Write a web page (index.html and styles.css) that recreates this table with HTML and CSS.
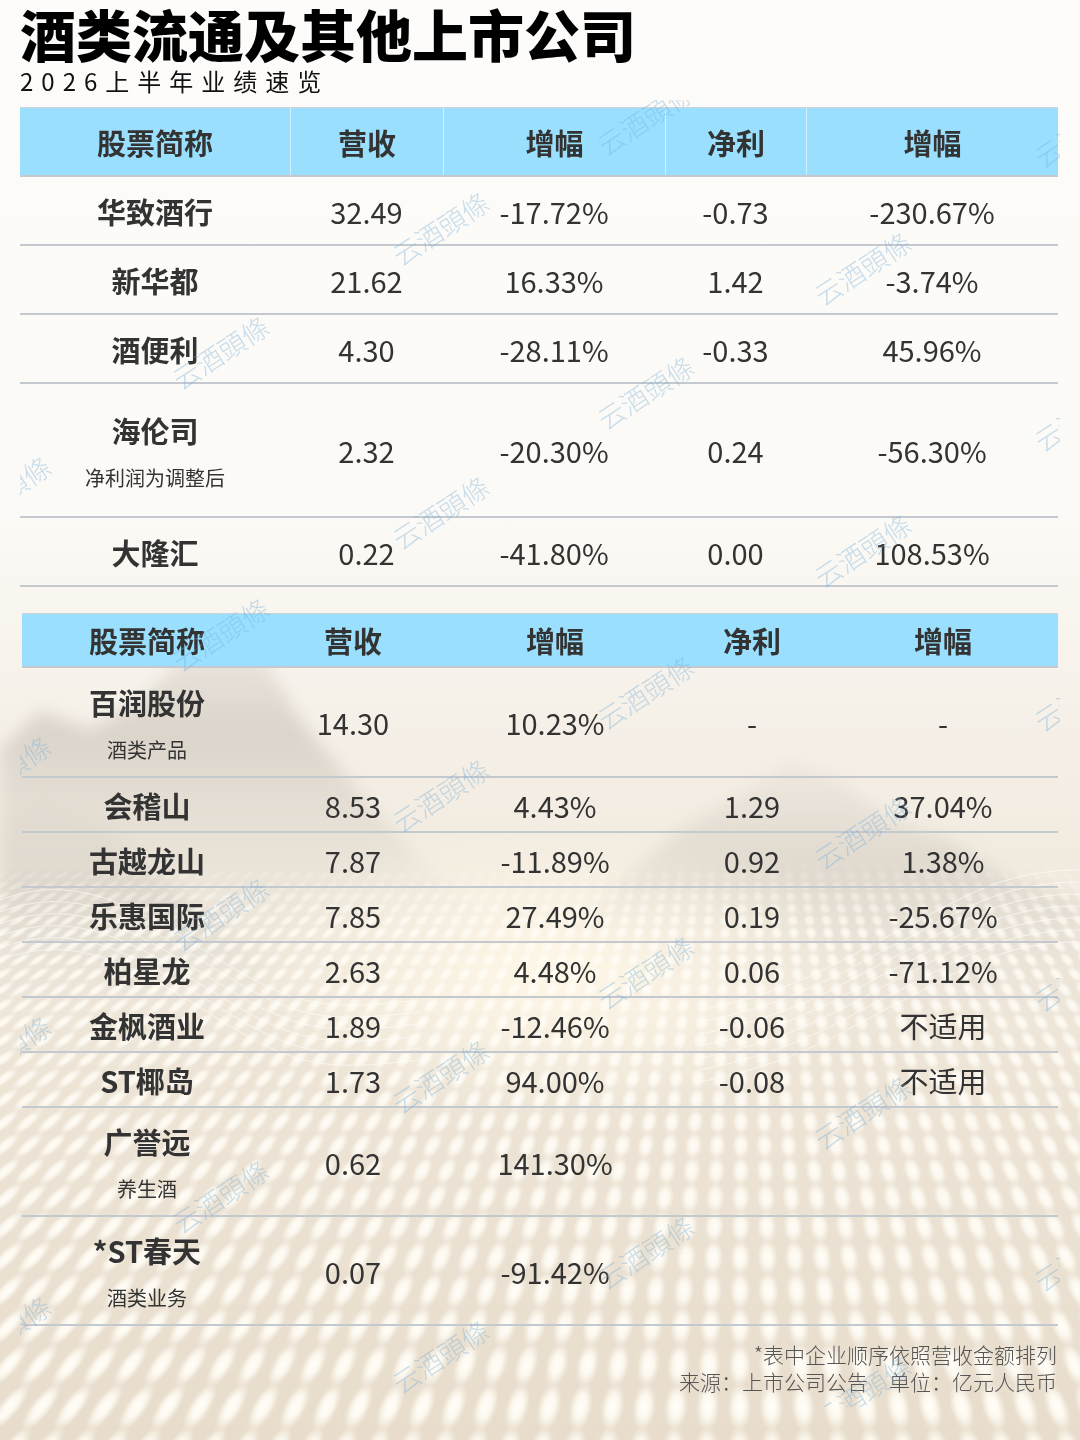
FILE: index.html
```html
<!DOCTYPE html>
<html lang="zh-CN">
<head>
<meta charset="utf-8">
<title>酒类流通及其他上市公司</title>
<link rel="stylesheet" href="styles.css">
</head>
<body>
<div class="page">
  <div class="bg">
    <svg class="mountains" width="1080" height="620" viewBox="0 0 1080 620" xmlns="http://www.w3.org/2000/svg">
      <defs>
        <linearGradient id="mg" x1="0" y1="0" x2="0" y2="1">
          <stop offset="0" stop-color="#d3ccc2" stop-opacity="0.15"/>
          <stop offset="0.3" stop-color="#d4cdc3" stop-opacity="0.8"/>
          <stop offset="1" stop-color="#ece5da" stop-opacity="0"/>
        </linearGradient>
        <linearGradient id="mg2" x1="0" y1="0" x2="0" y2="1">
          <stop offset="0" stop-color="#ddd6cc" stop-opacity="0.25"/>
          <stop offset="0.4" stop-color="#d9d2c8" stop-opacity="0.75"/>
          <stop offset="1" stop-color="#efe9df" stop-opacity="0"/>
        </linearGradient>
        <radialGradient id="glow" cx="0.5" cy="0.5" r="0.5">
          <stop offset="0" stop-color="#fff8e8" stop-opacity="1"/>
          <stop offset="1" stop-color="#fff8e8" stop-opacity="0"/>
        </radialGradient>
        <filter id="soft"><feGaussianBlur stdDeviation="8"/></filter>
      </defs>
      <g filter="url(#soft)">
        <path d="M0 170 L40 130 L90 150 L140 120 L190 70 L230 35 L265 80 L300 140 L350 200 L410 270 L470 330 L520 380 L0 430 Z" fill="url(#mg)"/>
        <path d="M0 240 L40 215 L100 240 L150 290 L210 340 L290 410 L0 460 Z" fill="url(#mg2)"/>
        <path d="M560 360 L620 300 L680 250 L740 215 L790 180 L840 200 L890 240 L950 260 L1010 300 L1080 320 L1080 470 L560 470 Z" fill="url(#mg2)"/>
        <ellipse cx="560" cy="390" rx="320" ry="150" fill="url(#glow)"/>
      </g>
      <g fill="none" stroke="#ffffff" stroke-opacity="0.6" stroke-width="1">
        <path d="M0 320 C80 290 140 330 220 380 S330 430 420 420"/>
        <path d="M0 332 C80 302 140 342 220 392 S330 442 420 432"/>
        <path d="M0 344 C80 314 140 354 220 404 S330 454 420 444"/>
        <path d="M0 356 C80 326 140 366 220 416 S330 466 420 456"/>
        <path d="M0 368 C80 338 140 378 220 428 S330 478 420 468"/>
        <path d="M0 380 C80 350 140 390 220 440 S330 490 420 480"/>
        <path d="M1080 290 C1000 290 960 320 900 350 S800 410 700 430"/>
        <path d="M1080 302 C1000 302 960 332 900 362 S800 422 700 442"/>
        <path d="M1080 314 C1000 314 960 344 900 374 S800 434 700 454"/>
        <path d="M1080 326 C1000 326 960 356 900 386 S800 446 700 466"/>
        <path d="M1080 338 C1000 338 960 368 900 398 S800 458 700 478"/>
        <path d="M1080 350 C1000 350 960 380 900 410 S800 470 700 490"/>
        <path d="M1080 362 C1000 362 960 392 900 422 S800 482 700 502"/>
      </g>
    </svg>
    <div class="dots"></div>
  </div>

  <header class="heading">
    <h1 class="title">酒类流通及其他上市公司</h1>
    <p class="subtitle">2026上半年业绩速览</p>
  </header>

  <section class="table t1">
    <div class="row head">
      <div class="cell">股票简称</div>
      <div class="cell">营收</div>
      <div class="cell">增幅</div>
      <div class="cell">净利</div>
      <div class="cell">增幅</div>
    </div>
    <div class="row">
      <div class="cell name">华致酒行</div>
      <div class="cell">32.49</div>
      <div class="cell">-17.72%</div>
      <div class="cell">-0.73</div>
      <div class="cell">-230.67%</div>
    </div>
    <div class="row">
      <div class="cell name">新华都</div>
      <div class="cell">21.62</div>
      <div class="cell">16.33%</div>
      <div class="cell">1.42</div>
      <div class="cell">-3.74%</div>
    </div>
    <div class="row">
      <div class="cell name">酒便利</div>
      <div class="cell">4.30</div>
      <div class="cell">-28.11%</div>
      <div class="cell">-0.33</div>
      <div class="cell">45.96%</div>
    </div>
    <div class="row tall">
      <div class="cell name stack"><span>海伦司</span><small>净利润为调整后</small></div>
      <div class="cell">2.32</div>
      <div class="cell">-20.30%</div>
      <div class="cell">0.24</div>
      <div class="cell">-56.30%</div>
    </div>
    <div class="row">
      <div class="cell name">大隆汇</div>
      <div class="cell">0.22</div>
      <div class="cell">-41.80%</div>
      <div class="cell">0.00</div>
      <div class="cell">108.53%</div>
    </div>
  </section>

  <section class="table t2">
    <div class="row head">
      <div class="cell">股票简称</div>
      <div class="cell">营收</div>
      <div class="cell">增幅</div>
      <div class="cell">净利</div>
      <div class="cell">增幅</div>
    </div>
    <div class="row tall">
      <div class="cell name stack"><span>百润股份</span><small>酒类产品</small></div>
      <div class="cell">14.30</div>
      <div class="cell">10.23%</div>
      <div class="cell">-</div>
      <div class="cell">-</div>
    </div>
    <div class="row">
      <div class="cell name">会稽山</div>
      <div class="cell">8.53</div>
      <div class="cell">4.43%</div>
      <div class="cell">1.29</div>
      <div class="cell">37.04%</div>
    </div>
    <div class="row">
      <div class="cell name">古越龙山</div>
      <div class="cell">7.87</div>
      <div class="cell">-11.89%</div>
      <div class="cell">0.92</div>
      <div class="cell">1.38%</div>
    </div>
    <div class="row">
      <div class="cell name">乐惠国际</div>
      <div class="cell">7.85</div>
      <div class="cell">27.49%</div>
      <div class="cell">0.19</div>
      <div class="cell">-25.67%</div>
    </div>
    <div class="row">
      <div class="cell name">柏星龙</div>
      <div class="cell">2.63</div>
      <div class="cell">4.48%</div>
      <div class="cell">0.06</div>
      <div class="cell">-71.12%</div>
    </div>
    <div class="row">
      <div class="cell name">金枫酒业</div>
      <div class="cell">1.89</div>
      <div class="cell">-12.46%</div>
      <div class="cell">-0.06</div>
      <div class="cell">不适用</div>
    </div>
    <div class="row">
      <div class="cell name">ST椰岛</div>
      <div class="cell">1.73</div>
      <div class="cell">94.00%</div>
      <div class="cell">-0.08</div>
      <div class="cell">不适用</div>
    </div>
    <div class="row tall">
      <div class="cell name stack"><span>广誉远</span><small>养生酒</small></div>
      <div class="cell">0.62</div>
      <div class="cell">141.30%</div>
      <div class="cell"></div>
      <div class="cell"></div>
    </div>
    <div class="row tall">
      <div class="cell name stack"><span>*ST春天</span><small>酒类业务</small></div>
      <div class="cell">0.07</div>
      <div class="cell">-91.42%</div>
      <div class="cell"></div>
      <div class="cell"></div>
    </div>
  </section>

  <footer class="notes">
    <p>*表中企业顺序依照营收金额排列</p>
    <p>来源：上市公司公告　单位：亿元人民币</p>
  </footer>

  <div class="watermarks" aria-hidden="true">
    <span class="wm" style="left:625px;top:18px">云酒頭條</span>
    <span class="wm" style="left:1062px;top:30px">云酒頭條</span>
    <span class="wm" style="left:420px;top:128px">云酒頭條</span>
    <span class="wm" style="left:842px;top:168px">云酒頭條</span>
    <span class="wm" style="left:200px;top:252px">云酒頭條</span>
    <span class="wm" style="left:625px;top:292px">云酒頭條</span>
    <span class="wm" style="left:1062px;top:314px">云酒頭條</span>
    <span class="wm" style="left:-18px;top:392px">云酒頭條</span>
    <span class="wm" style="left:420px;top:412px">云酒頭條</span>
    <span class="wm" style="left:842px;top:450px">云酒頭條</span>
    <span class="wm" style="left:200px;top:534px">云酒頭條</span>
    <span class="wm" style="left:625px;top:592px">云酒頭條</span>
    <span class="wm" style="left:1062px;top:594px">云酒頭條</span>
    <span class="wm" style="left:-18px;top:672px">云酒頭條</span>
    <span class="wm" style="left:420px;top:695px">云酒頭條</span>
    <span class="wm" style="left:842px;top:732px">云酒頭條</span>
    <span class="wm" style="left:200px;top:814px">云酒頭條</span>
    <span class="wm" style="left:625px;top:872px">云酒頭條</span>
    <span class="wm" style="left:1062px;top:874px">云酒頭條</span>
    <span class="wm" style="left:-18px;top:952px">云酒頭條</span>
    <span class="wm" style="left:420px;top:976px">云酒頭條</span>
    <span class="wm" style="left:842px;top:1012px">云酒頭條</span>
    <span class="wm" style="left:200px;top:1096px">云酒頭條</span>
    <span class="wm" style="left:625px;top:1152px">云酒頭條</span>
    <span class="wm" style="left:1062px;top:1154px">云酒頭條</span>
    <span class="wm" style="left:-18px;top:1232px">云酒頭條</span>
    <span class="wm" style="left:420px;top:1256px">云酒頭條</span>
    <span class="wm" style="left:842px;top:1292px">云酒頭條</span>
  </div>
</div>
</body>
</html>
```

FILE: styles.css
```css
* { box-sizing: border-box; }

html, body {
  margin: 0;
  padding: 0;
}

body {
  font-family: "Noto Sans CJK SC", "Noto Sans", sans-serif;
  color: #333333;
}

.page {
  position: relative;
  width: 1080px;
  height: 1440px;
  overflow: hidden;
  padding: 3px 22px 0 20px;
  background: linear-gradient(180deg, #fdfcfa 0px, #fcfaf6 520px, #f6f1e9 700px, #efe7da 950px, #e8ddcc 1440px);
}

/* background decoration */
.bg {
  position: absolute;
  inset: 0;
  z-index: 0;
  pointer-events: none;
}

.mountains {
  position: absolute;
  left: 0;
  top: 580px;
}

.dots {
  position: absolute;
  left: -600px;
  top: 860px;
  width: 2280px;
  height: 900px;
  background-image: radial-gradient(ellipse 5.5px 9.5px at 50% 50%, rgba(255, 254, 249, 1) 0%, rgba(255, 252, 244, 0.92) 45%, rgba(255, 252, 244, 0) 100%);
  background-size: 15px 17px;
  transform: perspective(700px) rotateX(55deg);
  transform-origin: 59% 0;
  -webkit-mask-image: linear-gradient(180deg, rgba(0,0,0,0) 0%, rgba(0,0,0,0.8) 12%, #000 55%);
  mask-image: linear-gradient(180deg, rgba(0,0,0,0) 0%, rgba(0,0,0,0.8) 12%, #000 55%);
}

/* heading */
.heading {
  position: relative;
  z-index: 1;
}

.title {
  margin: 0;
  font-size: 56px;
  line-height: 60px;
  font-weight: 900;
  color: #000000;
  letter-spacing: 0;
}

.subtitle {
  margin: 4px 0 0;
  font-size: 24px;
  line-height: 28px;
  font-weight: 400;
  color: #111111;
  letter-spacing: 8px;
}

/* tables */
.table {
  position: relative;
  z-index: 1;
}

.row {
  display: grid;
  height: 69px;
  border-bottom: 2px solid #c4c8cf;
}

.t1 {
  margin-top: 12px;
  width: 1038px;
}

.t1 .row {
  grid-template-columns: 270px 153px 222px 141px 252px;
}

.t2 {
  margin-top: 26px;
  margin-left: 2px;
  width: 1036px;
}

.t2 .row {
  grid-template-columns: 250px 162px 242px 152px 230px;
  height: 55px;
}

.cell {
  display: flex;
  align-items: center;
  justify-content: center;
  font-size: 29px;
  line-height: 40px;
  font-weight: 400;
  color: #333333;
  white-space: nowrap;
}

.cell.name {
  font-weight: 700;
}

.row.head {
  background: #9ae0fe;
  border-top: 1px solid #cfd3d8;
  border-bottom: 2px solid #c4c8cf;
}

.row.head .cell {
  font-weight: 700;
}

.t1 .row.head {
  height: 70px;
}

.t1 .row.head .cell + .cell {
  border-left: 1.5px solid rgba(255, 255, 255, 0.55);
}

.t2 .row.head {
  height: 55px;
}

.t1 .row.tall {
  height: 134px;
}

.t2 .row.tall {
  height: 110px;
}

.t2 .row.tall:nth-last-child(-n+2) {
  height: 109px;
}

.stack {
  flex-direction: column;
}

.stack span {
  display: block;
  line-height: 42px;
}

.stack small {
  display: block;
  margin-top: 13px;
  font-size: 20px;
  line-height: 28px;
  font-weight: 400;
  color: #333333;
}

/* footer */
.notes {
  position: relative;
  z-index: 1;
  padding-top: 15px;
  text-align: right;
  width: 1037px;
}

.notes p {
  margin: 0;
  font-size: 21px;
  line-height: 27px;
  font-weight: 300;
  color: #555555;
}

/* watermarks */
.watermarks {
  position: absolute;
  left: 20px;
  right: 20px;
  top: 100px;
  height: 1307px;
  overflow: hidden;
  z-index: 2;
  pointer-events: none;
}

.wm {
  position: absolute;
  transform: translate(-50%, -50%) rotate(-33deg);
  font-family: "Noto Sans CJK TC", "Noto Sans CJK SC", sans-serif;
  font-weight: 300;
  font-size: 27px;
  line-height: 1;
  white-space: nowrap;
  color: rgba(120, 175, 215, 0.4);
}
```
